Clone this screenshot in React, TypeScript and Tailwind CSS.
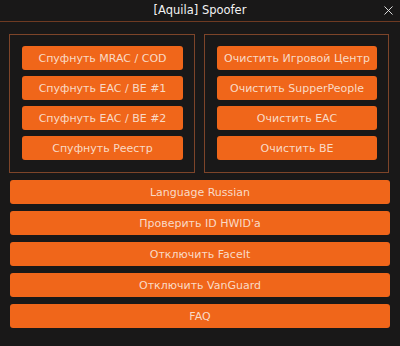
import { X } from 'lucide-react';

const leftActions = ['Спуфнуть MRAC / COD', 'Спуфнуть EAC / BE #1', 'Спуфнуть EAC / BE #2', 'Спуфнуть Реестр'];
const rightActions = ['Очистить Игровой Центр', 'Очистить SupperPeople', 'Очистить EAC', 'Очистить BE'];
const wideActions = ['Language Russian', "Проверить ID HWID'a", 'Отключить FaceIt', 'Отключить VanGuard', 'FAQ'];

function OrangeButton({ label, className = '' }: { label: string; className?: string }) {
  return (
    <button
      className={`flex items-center justify-center rounded-[3px] bg-[#f0661a] text-[11px] text-[#f9dac6] leading-none ${className}`}
    >
      {label}
    </button>
  );
}

function Panel({ items }: { items: string[] }) {
  return (
    <div className="flex flex-col gap-[6px] border border-[#7d4429] pt-[11px] pb-[12px] pl-[12px] pr-[11px]">
      {items.map((item) => (
        <OrangeButton key={item} label={item} className="h-[24px]" />
      ))}
    </div>
  );
}

export default function App() {
  return (
    <div className="w-[400px] h-[346px] bg-[#191818] font-['DejaVu_Sans',sans-serif] overflow-hidden">
      {/* Title bar */}
      <div className="relative flex h-[22px] items-center justify-center border-b border-[#6e3a22]">
        <span className="text-[11.5px] text-[#f2f2f2]">[Aquila] Spoofer</span>
        <X className="absolute right-[4px] top-[3px] h-[15px] w-[15px] text-[#e8e8e8]" strokeWidth={1.5} />
      </div>

      <div className="px-[9px] pt-[12px]">
        <div className="grid grid-cols-[186px_185px] gap-[9px]">
          <Panel items={leftActions} />
          <Panel items={rightActions} />
        </div>

        <div className="mt-[7px] flex flex-col gap-[7px] px-[1px]">
          {wideActions.map((item) => (
            <OrangeButton key={item} label={item} className="h-[24px] w-full" />
          ))}
        </div>
      </div>
    </div>
  );
}
